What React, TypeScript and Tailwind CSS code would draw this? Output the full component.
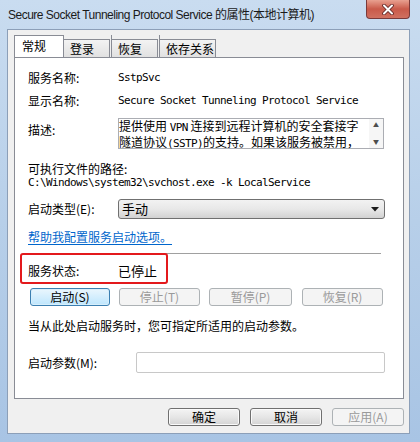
import React from "react"

const cjk = { fontFamily: '"Noto Sans CJK SC", "Noto Sans", sans-serif' }
const mono = { fontFamily: '"DejaVu Sans Mono", "Noto Sans CJK SC", monospace' }

function Mono({ children }: { children: React.ReactNode }) {
  return (
    <span className="text-[11px] tracking-[-0.62px]" style={mono}>
      {children}
    </span>
  )
}

function Tab({ label, w, active }: { label: string; w: number; active?: boolean }) {
  if (active) {
    return (
      <div
        className="relative z-10 -mb-px flex h-[22px] items-start border border-b-0 border-[#898c95] bg-white pl-[7px] pt-[2px] text-[12px] leading-[16px]"
        style={{ width: w }}
      >
        {label}
      </div>
    )
  }
  return (
    <div
      className="mt-[4px] flex h-[18px] items-center border border-b-0 border-l-0 border-[#898c95] bg-gradient-to-b from-[#f3f3f3] to-[#e1e1e1] pl-[6px] text-[12px] leading-[16px]"
      style={{ width: w }}
    >
      {label}
    </div>
  )
}

function Btn({
  label,
  w,
  ml,
  variant,
}: {
  label: string
  w: number
  ml: number
  variant: "default" | "disabled" | "normal"
}) {
  const base =
    "flex h-[18px] items-center justify-center rounded-[3px] border text-[12px] leading-[16px]"
  const styles = {
    default: "border-[#3c7fb1] bg-gradient-to-b from-[#eaf6fd] to-[#bee6fd] text-black shadow-[inset_0_0_0_1px_#d7effc]",
    disabled: "border-[#adb2b5] bg-[#f4f4f4] text-[#9a9a9a]",
    normal: "border-[#707070] bg-gradient-to-b from-[#f4f4f4] via-[#e6e6e6] to-[#d4d4d4] text-black shadow-[inset_0_0_0_1px_#fafafa]",
  }
  return (
    <div className={`${base} ${styles[variant]}`} style={{ width: w, marginLeft: ml }}>
      {label}
    </div>
  )
}

export default function App() {
  return (
    <div
      className="relative flex h-[442px] w-[420px] flex-col overflow-hidden bg-gradient-to-b from-[#c9dcf0] via-[#b7cfe9] to-[#a8c4e4] text-black"
      style={cjk}
    >
      {/* title bar */}
      <div className="flex h-[29px] shrink-0 items-center pl-[8px] text-[12px] tracking-[-0.5px] text-[#1a1a1a]">
        <span style={{ fontFamily: '"Liberation Sans", "Noto Sans CJK SC", sans-serif' }}>
          Secure Socket Tunneling Protocol Service 的属性(本地计算机)
        </span>
      </div>
      <div className="absolute right-[10px] top-0 flex h-[19px] w-[44px] items-center justify-center rounded-b-[4px] border border-t-0 border-[#7a3a3a] bg-gradient-to-b from-[#e8a090] via-[#c95a4a] to-[#d07060]">
        <svg width="12" height="11" viewBox="0 0 12 11">
          <path d="M2 1.5 L10 9.5 M10 1.5 L2 9.5" stroke="#5a2020" strokeWidth="3.6" strokeLinecap="round" />
          <path d="M2 1.5 L10 9.5 M10 1.5 L2 9.5" stroke="#ffffff" strokeWidth="2" strokeLinecap="round" />
        </svg>
      </div>

      {/* client area */}
      <div className="ml-[7px] mr-[10px] flex h-[405px] flex-col border border-[#8c9fb8] bg-[#f0f0f0] pl-[6px] pr-[5px] pt-[5px]">
        <div className="flex">
          <Tab label="常规" w={50} active />
          <Tab label="登录" w={46} />
          <div className="w-px" />
          <div className="flex border-l border-[#898c95]">
            <Tab label="恢复" w={46} />
          </div>
          <div className="w-px" />
          <div className="flex border-l border-[#898c95]">
            <Tab label="依存关系" w={56} />
          </div>
        </div>

        {/* panel */}
        <div className="flex h-[342px] w-[390px] flex-col border border-[#898c95] bg-white text-[12px] leading-[16px]">
          <div className="mt-[12px] flex h-[16px] items-center pl-[13px]">
            <span className="w-[90px]">服务名称:</span>
            <Mono>SstpSvc</Mono>
          </div>
          <div className="mt-[7px] flex h-[16px] items-center pl-[13px]">
            <span className="w-[90px]">显示名称:</span>
            <Mono>Secure Socket Tunneling Protocol Service</Mono>
          </div>
          <div className="mt-[9px] flex items-start pl-[13px]">
            <span className="mt-[4px] w-[90px]">描述:</span>
            <div className="flex h-[31px] w-[266px] border border-[#abadb3] bg-white">
              <div className="flex-1 text-[12px] leading-[14px]">
                <div className="whitespace-nowrap">
                  提供使用 <Mono>VPN</Mono> 连接到远程计算机的安全套接字
                </div>
                <div className="whitespace-nowrap">
                  隧道协议<Mono>(SSTP)</Mono>的支持。如果该服务被禁用，
                </div>
              </div>
              <div className="flex w-[14px] flex-col items-center justify-between bg-[#f6f6f6] py-[2px] text-[6px] leading-[8px] text-[#4d4d4d]">
                <span>▲</span>
                <span>▼</span>
              </div>
            </div>
          </div>
          <div className="mt-[13px] flex h-[14px] items-center pl-[13px]">可执行文件的路径:</div>
          <div className="flex h-[14px] items-center pl-[13px]">
            <Mono>C:\Windows\system32\svchost.exe -k LocalService</Mono>
          </div>
          <div className="mt-[9px] flex items-center pl-[13px]">
            <span className="w-[90px]">启动类型(E):</span>
            <div className="relative flex h-[20px] w-[267px] items-center rounded-[3px] border border-[#707070] bg-gradient-to-b from-[#f2f2f2] via-[#e8e8e8] to-[#d2d2d2] pl-[3px] text-[13px]">
              手动
              <svg className="absolute right-[5px] top-[7px]" width="8" height="5" viewBox="0 0 8 5">
                <path d="M0 0 H8 L4 4.5 Z" fill="#1a1a1a" />
              </svg>
            </div>
          </div>
          <div className="mt-[10px] flex h-[16px] items-center pl-[13px]">
            <span className="text-[#0066cc] underline underline-offset-2">帮助我配置服务启动选项。</span>
          </div>
          <div className="ml-[13px] mt-[8px] h-px w-[353px] bg-[#a0a0a0]" />
          <div className="relative mt-[9px] flex h-[16px] items-center pl-[13px]">
            <span className="w-[90px]">服务状态:</span>
            <span className="text-[13px]">已停止</span>
            <div className="absolute left-[5px] top-[-10px] h-[31px] w-[148px] rounded-[3px] border-2 border-[#e3191c]" />
          </div>
          <div className="mt-[9px] flex">
            <Btn label="启动(S)" w={80} ml={15} variant="default" />
            <Btn label="停止(T)" w={81} ml={9} variant="disabled" />
            <Btn label="暂停(P)" w={83} ml={9} variant="disabled" />
            <Btn label="恢复(R)" w={81} ml={10} variant="disabled" />
          </div>
          <div className="mt-[12px] flex h-[16px] items-center pl-[13px]">
            当从此处启动服务时，您可指定所适用的启动参数。
          </div>
          <div className="mt-[18px] flex items-center pl-[13px]">
            <span className="w-[108px]">启动参数(M):</span>
            <div className="h-[21px] w-[249px] rounded-[2px] border border-[#c8c8c8] bg-white" />
          </div>
        </div>

        {/* bottom buttons */}
        <div className="mt-[9px] flex justify-end">
          <Btn label="确定" w={72} ml={0} variant="normal" />
          <Btn label="取消" w={72} ml={10} variant="normal" />
          <Btn label="应用(A)" w={72} ml={10} variant="disabled" />
        </div>
      </div>
    </div>
  )
}
